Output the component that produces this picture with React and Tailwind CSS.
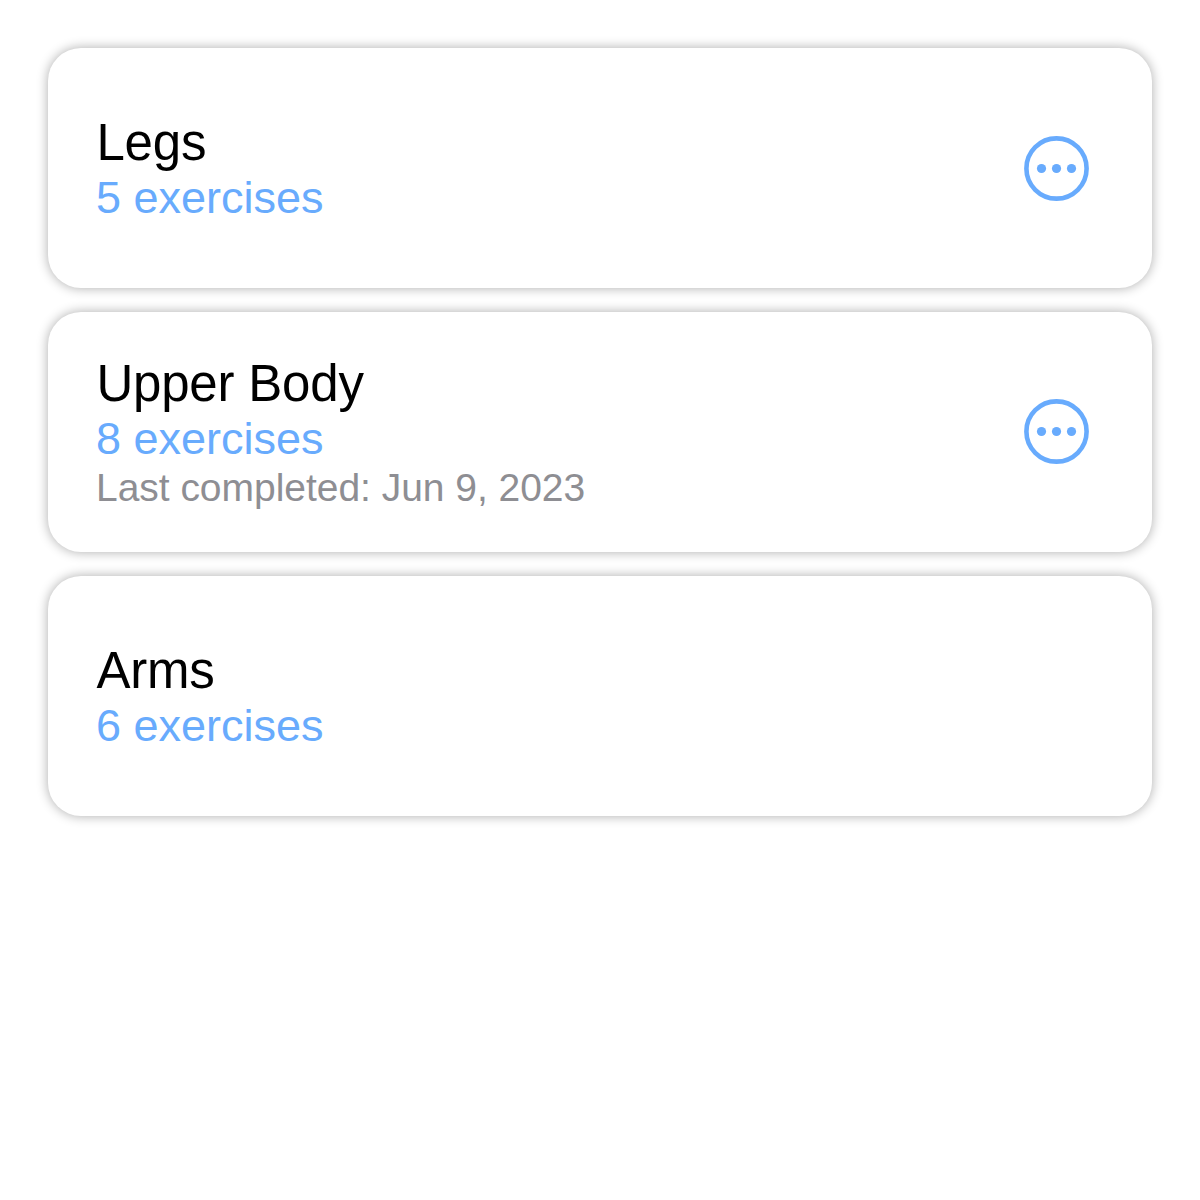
const workouts = [
  { name: "Legs", exercises: 5, menu: true },
  { name: "Upper Body", exercises: 8, completed: "Jun 9, 2023", menu: true },
  { name: "Arms", exercises: 6, menu: false },
];

function MoreIcon() {
  return (
    <svg viewBox="0 0 65 65" className="size-[65px]" fill="none">
      <circle cx="32.5" cy="32.5" r="30.1" stroke="currentColor" strokeWidth="4.6" />
      <circle cx="17.5" cy="32.5" r="4.6" fill="currentColor" />
      <circle cx="32.5" cy="32.5" r="4.6" fill="currentColor" />
      <circle cx="47.5" cy="32.5" r="4.6" fill="currentColor" />
    </svg>
  );
}

function WorkoutCard({ name, exercises, completed, menu }) {
  return (
    <div className="flex h-60 items-center justify-between rounded-[33px] bg-white pl-12 pr-[63px] shadow-[0_0_12px_rgba(0,0,0,0.33)]">
      <div className="whitespace-nowrap">
        <h2 className="pl-[0.4px] pt-0.5 text-[51px] leading-[58px] tracking-[-0.2px] text-black">{name}</h2>
        <p className="text-[45px] leading-[52px] tracking-[-0.02px] text-[#68abfd]">{exercises} exercises</p>
        {completed && (
          <p className="text-[39px] leading-[46px] tracking-[-0.03px] text-[#8e8e93]">Last completed: {completed}</p>
        )}
      </div>
      {menu && (
        <button aria-label="More options" className={completed ? "pb-0.5 text-[#68abfd]" : "text-[#68abfd]"}>
          <MoreIcon />
        </button>
      )}
    </div>
  );
}

export default function App() {
  return (
    <main className="flex min-h-screen flex-col gap-6 bg-white p-12 font-['Liberation_Sans',sans-serif]">
      {workouts.map((w) => (
        <WorkoutCard key={w.name} {...w} />
      ))}
    </main>
  );
}
